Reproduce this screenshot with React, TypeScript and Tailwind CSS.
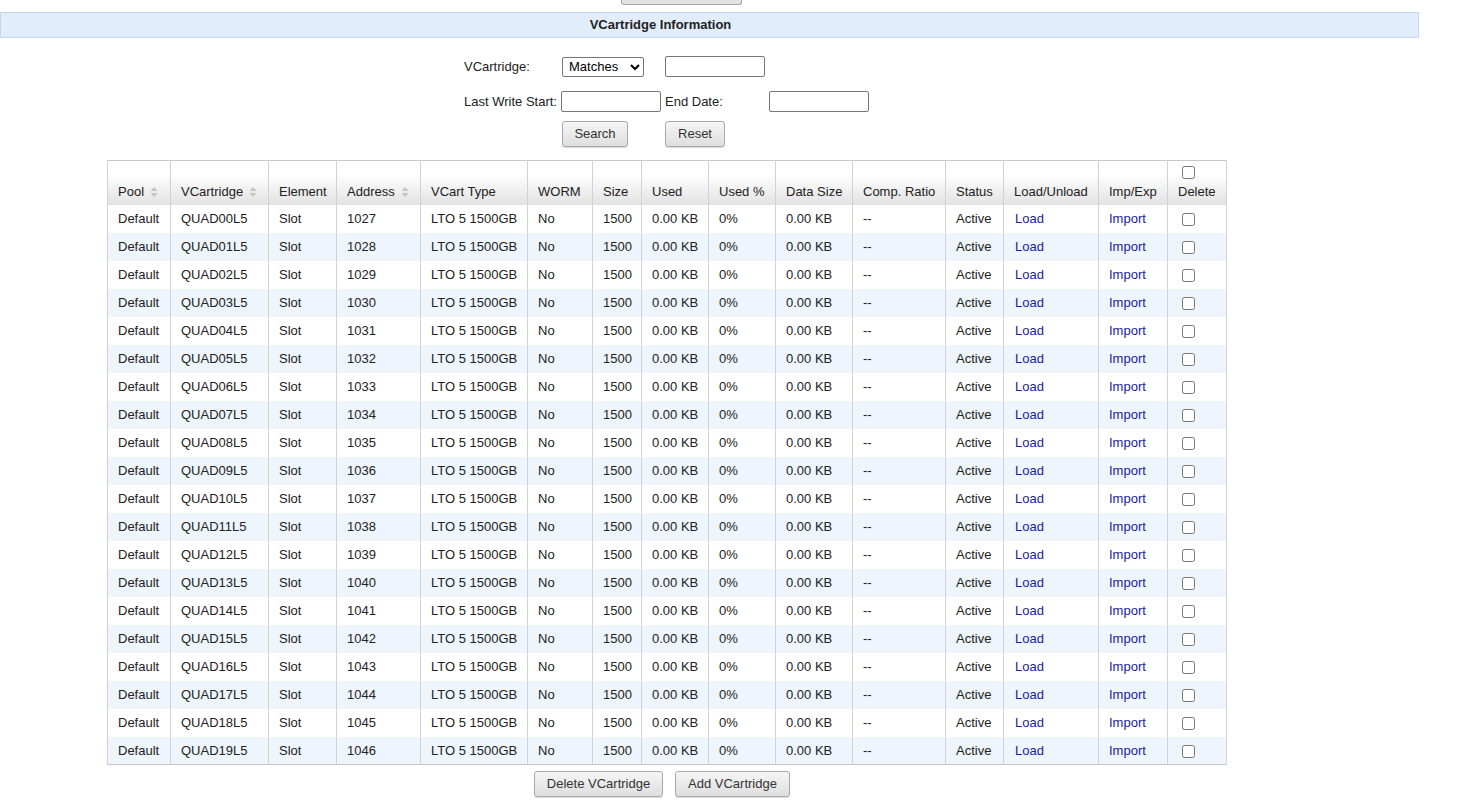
import React from 'react';

const cols = [
    { label: "Pool", w: 63, sort: true },
    { label: "VCartridge", w: 98, sort: true },
    { label: "Element", w: 68 },
    { label: "Address", w: 84, sort: true },
    { label: "VCart Type", w: 107 },
    { label: "WORM", w: 65 },
    { label: "Size", w: 49 },
    { label: "Used", w: 67 },
    { label: "Used %", w: 67 },
    { label: "Data Size", w: 77 },
    { label: "Comp. Ratio", w: 93 },
    { label: "Status", w: 58 },
    { label: "Load/Unload", w: 95 },
    { label: "Imp/Exp", w: 69 },
    { label: "Delete", w: 59 },
];

const rows = Array.from({ length: 20 }, (_, i) => ({
    name: `QUAD${String(i).padStart(2, '0')}L5`,
    address: 1027 + i,
}));

function SortIcon() {
    return (
        <svg width="8" height="10" viewBox="0 0 8 10" className="inline-block ml-[6px] align-[-1px]">
            <path d="M4 0 L7.5 4 L0.5 4 Z" fill="#c4c4c4" />
            <path d="M4 10 L7.5 6 L0.5 6 Z" fill="#c4c4c4" />
        </svg>
    );
}

const btn = "h-[26px] px-0 whitespace-nowrap border border-[#a9a9a9] rounded-[3px] bg-gradient-to-b from-[#f6f6f6] to-[#dedede] text-[13px] text-[#333] shadow-[0_1px_1px_rgba(0,0,0,0.15)]";
const field = "h-[21px] border border-[#767676] rounded-[2px] bg-white";

export default function App() {
    return (
        <div className="w-[1419px] min-h-[804px] bg-white font-['Liberation_Sans',Arial,sans-serif] text-[13px] text-[#222]">
            {/* top button (scrolled off) */}
            <div className="ml-[621px] w-[121px] h-[5px] border-x border-b border-[#a9a9a9] rounded-b-[3px] bg-[#e2e2e2]" />

            {/* Banner */}
            <div className="mt-[7px] h-[26px] bg-[#e1edfb] border border-[#c5d6ee] text-center font-bold leading-[24px] pr-[98px]">
                VCartridge Information
            </div>

            {/* Search form */}
            <div className="ml-[464px] mt-[18px] flex flex-col">
                <div className="flex items-center h-[21px]">
                    <span className="w-[98px]">VCartridge:</span>
                    <select className="w-[82px] h-[20px] border border-[#767676] rounded-[2px] bg-white text-[13px] pl-[2px] text-black">
                        <option>Matches</option>
                    </select>
                    <div className="w-[21px]" />
                    <input className={`${field} w-[100px]`} />
                </div>
                <div className="flex items-center h-[21px] mt-[14px]">
                    <span className="w-[97px]">Last Write Start:</span>
                    <input className={`${field} w-[100px]`} />
                    <span className="w-[108px] pl-[4px]">End Date:</span>
                    <input className={`${field} w-[100px]`} />
                </div>
                <div className="flex items-center mt-[9px]">
                    <div className="w-[98px]" />
                    <button className={`${btn} w-[66px]`}>Search</button>
                    <div className="w-[37px]" />
                    <button className={`${btn} w-[60px]`}>Reset</button>
                </div>
            </div>

            {/* Table */}
            <div className="ml-[107px] mt-[13px] w-[1120px]">
                <table className="table-fixed border-collapse w-[1120px] border border-[#c8c8c8]">
                    <colgroup>
                        {cols.map((c) => (
                            <col key={c.label} style={{ width: c.w }} />
                        ))}
                    </colgroup>
                    <thead>
                        <tr className="h-[44px] bg-gradient-to-b from-white from-30% to-[#e2e2e2]">
                            {cols.map((c) => (
                                <th key={c.label} className="border-x border-[#d2d2d2] font-normal text-left align-bottom pl-[10px] pb-[3px] whitespace-nowrap">
                                    {c.label === "Delete" ? (
                                        <div className="flex flex-col items-start">
                                            <input type="checkbox" className="w-[13px] h-[13px] ml-[4px] mb-[3px]" />
                                            <span>Delete</span>
                                        </div>
                                    ) : (
                                        <>
                                            {c.label}
                                            {c.sort && <SortIcon />}
                                        </>
                                    )}
                                </th>
                            ))}
                        </tr>
                    </thead>
                    <tbody>
                        {rows.map((r, i) => (
                            <tr key={r.name} className={`h-[28px] ${i % 2 === 1 ? 'bg-[#eef5fd]' : 'bg-white'}`}>
                                {[
                                    "Default",
                                    r.name,
                                    "Slot",
                                    String(r.address),
                                    "LTO 5 1500GB",
                                    "No",
                                    "1500",
                                    "0.00 KB",
                                    "0%",
                                    "0.00 KB",
                                    "--",
                                    "Active",
                                ].map((v, j) => (
                                    <td key={j} className="border-x border-[#d2d2d2] pl-[10px] whitespace-nowrap">{v}</td>
                                ))}
                                <td className="border-x border-[#d2d2d2] pl-[11px]"><a className="text-[#1a1aa8] cursor-pointer">Load</a></td>
                                <td className="border-x border-[#d2d2d2] pl-[10px]"><a className="text-[#1a1aa8] cursor-pointer">Import</a></td>
                                <td className="border-x border-[#d2d2d2] pl-[10px]">
                                    <input type="checkbox" className="w-[13px] h-[13px] ml-[4px] align-middle" />
                                </td>
                            </tr>
                        ))}
                    </tbody>
                </table>
            </div>

            {/* Actions */}
            <div className="ml-[534px] mt-[6px] flex gap-[12px]">
                <button className={`${btn} w-[129px]`}>Delete VCartridge</button>
                <button className={`${btn} w-[115px]`}>Add VCartridge</button>
            </div>
        </div>
    );
}
